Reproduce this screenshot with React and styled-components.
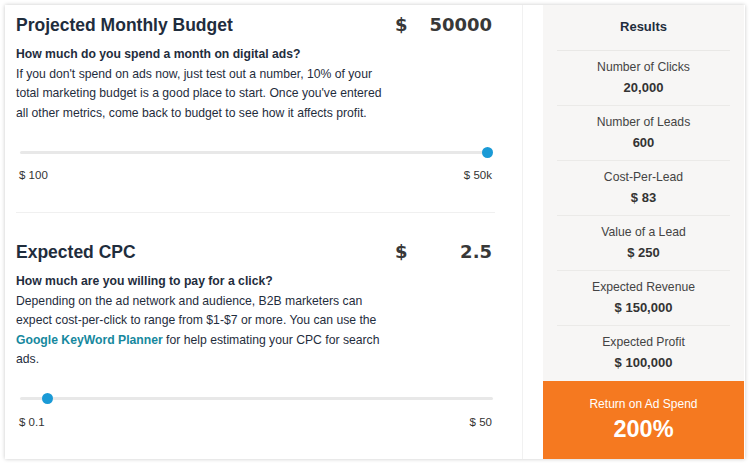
import React from "react";
import styled, { createGlobalStyle } from "styled-components";

const GlobalStyle = createGlobalStyle`
  html, body {
    margin: 0;
    padding: 0;
    background: #ffffff;
  }
  body {
    font-family: "Liberation Sans", Arial, sans-serif;
  }
`;

const Card = styled.div`
  margin: 5px;
  width: 740px;
  height: 454px;
  display: flex;
  box-sizing: border-box;
  background: #ffffff;
  box-shadow: 0 0 4px rgba(0, 0, 0, 0.22);
`;

const LeftCol = styled.div`
  width: 518px;
  box-sizing: border-box;
  padding: 0 27px 0 11px;
  border-right: 1px solid #f1f1f1;
`;

const Section = styled.div`
  padding: 25px 0 29px;
  border-bottom: 1px solid #f0f0f0;

  &:first-child {
    padding-top: 6px;
  }
  &:last-child {
    border-bottom: none;
  }
`;

const TopRow = styled.div`
  display: flex;
  justify-content: space-between;
  align-items: flex-start;
`;

const TextCol = styled.div`
  width: 372px;
`;

const Title = styled.h2`
  margin: 0;
  height: 28px;
  font-size: 17.5px;
  line-height: 28px;
  font-weight: bold;
  color: #1f2d3d;
`;

const ValueBox = styled.div`
  display: flex;
  width: 97px;
  margin-right: 3px;
  font-family: "DejaVu Sans", Verdana, sans-serif;
  font-weight: bold;
  font-size: 18px;
  line-height: 28px;
  color: #383838;
`;

const Currency = styled.span``;

const Amount = styled.span`
  flex: 1;
  text-align: right;
`;

const Copy = styled.div`
  margin-top: 6px;
  font-size: 12.2px;
  line-height: 19.5px;
  color: #1f2d3d;
`;

const Question = styled.div`
  font-weight: bold;
`;

const Link = styled.a`
  color: #16889e;
  font-weight: bold;
  text-decoration: none;
`;

const Range = styled.input`
  -webkit-appearance: none;
  appearance: none;
  display: block;
  width: 473px;
  height: 20px;
  margin: 19px 0 0 4px;
  background: transparent;
  outline: none;

  &::-webkit-slider-runnable-track {
    height: 3px;
    background: #e8e8e8;
    border-radius: 2px;
  }
  &::-webkit-slider-thumb {
    -webkit-appearance: none;
    width: 11px;
    height: 11px;
    margin-top: -4px;
    border-radius: 50%;
    background: #1a9ad6;
    border: none;
  }
  &::-moz-range-track {
    height: 3px;
    background: #e8e8e8;
  }
  &::-moz-range-thumb {
    width: 11px;
    height: 11px;
    border-radius: 50%;
    background: #1a9ad6;
    border: none;
  }
`;

const RangeLabels = styled.div`
  display: flex;
  justify-content: space-between;
  margin-top: 5px;
  padding: 0 3px 0 3px;
  font-size: 11.5px;
  line-height: 16px;
  color: #333333;
`;

const Results = styled.div`
  margin-left: 20px;
  width: 201px;
  display: flex;
  flex-direction: column;
  background: #f7f6f5;
  text-align: center;
`;

const ResultsTitle = styled.div`
  margin: 0 14px;
  padding: 12px 0 13px;
  font-size: 13px;
  line-height: 20px;
  font-weight: bold;
  color: #1f2d3d;
  border-bottom: 1px solid #e9e8e6;
`;

const ResultItem = styled.div`
  margin: 0 14px;
  padding: 6px 0 7px;
  border-bottom: 1px solid #ebeae8;

  &:nth-last-child(2) {
    border-bottom: none;
  }
`;

const ResultLabel = styled.div`
  font-size: 12.2px;
  line-height: 20px;
  color: #444444;
`;

const ResultValue = styled.div`
  font-size: 13px;
  line-height: 21px;
  font-weight: bold;
  color: #333333;
`;

const Roas = styled.div`
  flex: 1;
  margin-top: 1px;
  padding-top: 14px;
  box-sizing: border-box;
  background: #f57920;
  color: #ffffff;
`;

const RoasLabel = styled.div`
  font-size: 12px;
  line-height: 18px;
`;

const RoasValue = styled.div`
  margin-top: 2px;
  font-size: 23.5px;
  line-height: 28px;
  font-weight: bold;
`;

const inputs = [
  {
    id: "budget",
    title: "Projected Monthly Budget",
    value: "50000",
    question: "How much do you spend a month on digital ads?",
    text: (
      <>
        If you don't spend on ads now, just test out a number, 10% of your
        total marketing budget is a good place to start. Once you've entered
        all other metrics, come back to budget to see how it affects profit.
      </>
    ),
    min: 100,
    max: 50000,
    current: 50000,
    step: 100,
    minLabel: "$ 100",
    maxLabel: "$ 50k",
  },
  {
    id: "cpc",
    title: "Expected CPC",
    value: "2.5",
    question: "How much are you willing to pay for a click?",
    text: (
      <>
        Depending on the ad network and audience, B2B marketers can expect
        cost-per-click to range from $1-$7 or more. You can use the{" "}
        <Link href="#">Google KeyWord Planner</Link> for help estimating your
        CPC for search ads.
      </>
    ),
    min: 0.1,
    max: 50,
    current: 2.5,
    step: 0.1,
    minLabel: "$ 0.1",
    maxLabel: "$ 50",
  },
];

const results = [
  { label: "Number of Clicks", value: "20,000" },
  { label: "Number of Leads", value: "600" },
  { label: "Cost-Per-Lead", value: "$ 83" },
  { label: "Value of a Lead", value: "$ 250" },
  { label: "Expected Revenue", value: "$ 150,000" },
  { label: "Expected Profit", value: "$ 100,000" },
];

const App = () => {
  return (
    <>
      <GlobalStyle />
      <Card>
        <LeftCol>
          {inputs.map((item) => (
            <Section key={item.id}>
              <TopRow>
                <TextCol>
                  <Title>{item.title}</Title>
                  <Copy>
                    <Question>{item.question}</Question>
                    {item.text}
                  </Copy>
                </TextCol>
                <ValueBox>
                  <Currency>$</Currency>
                  <Amount>{item.value}</Amount>
                </ValueBox>
              </TopRow>
              <Range
                type="range"
                min={item.min}
                max={item.max}
                step={item.step}
                defaultValue={item.current}
              />
              <RangeLabels>
                <span>{item.minLabel}</span>
                <span>{item.maxLabel}</span>
              </RangeLabels>
            </Section>
          ))}
        </LeftCol>
        <Results>
          <ResultsTitle>Results</ResultsTitle>
          {results.map((r) => (
            <ResultItem key={r.label}>
              <ResultLabel>{r.label}</ResultLabel>
              <ResultValue>{r.value}</ResultValue>
            </ResultItem>
          ))}
          <Roas>
            <RoasLabel>Return on Ad Spend</RoasLabel>
            <RoasValue>200%</RoasValue>
          </Roas>
        </Results>
      </Card>
    </>
  );
};

export default App;
